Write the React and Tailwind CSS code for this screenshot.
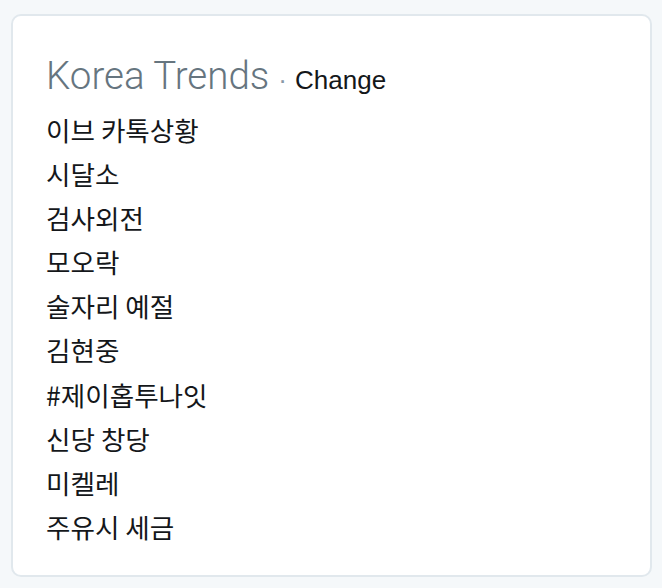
const trends = [
  '이브 카톡상황',
  '시달소',
  '검사외전',
  '모오락',
  '술자리 예절',
  '김현중',
  '#제이홉투나잇',
  '신당 창당',
  '미켈레',
  '주유시 세금',
];

export default function App() {
  return (
    <div className="h-[588px] w-[662px] bg-[#f5f8fa] pl-[11px] pt-[14px]">
      <section className="h-[563px] w-[641px] rounded-[10px] border-2 border-[#e1e8ed] bg-white pl-[33px] pt-[36px]">
        <h2 className="flex items-baseline leading-[48px]">
          <span className="font-['Roboto','Liberation_Sans',sans-serif] text-[38.5px] font-light text-[#66757f]">
            Korea Trends
          </span>
          <span className="ml-[9px] font-['Liberation_Sans',sans-serif] text-[26px] text-[#8899a6]">·</span>
          <span className="ml-[8px] font-['Liberation_Sans',sans-serif] text-[26px] text-[#14171a]">Change</span>
        </h2>
        <ul className="mt-[4px] font-['Noto_Sans_CJK_KR',sans-serif] text-[26.6px] font-normal text-[#14171a]">
          {trends.map((trend) => (
            <li key={trend} className="leading-[44.1px]">
              {trend}
            </li>
          ))}
        </ul>
      </section>
    </div>
  );
}
